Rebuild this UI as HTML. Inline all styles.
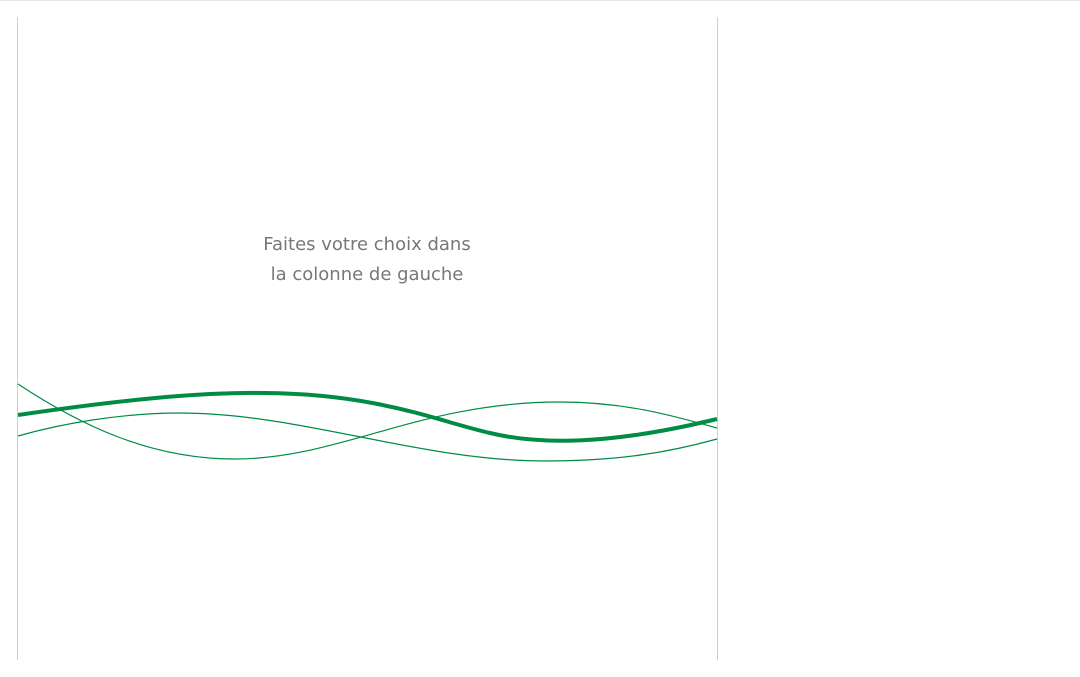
<!DOCTYPE html>
<html><head><meta charset="utf-8"><style>
html,body{margin:0;padding:0;background:#fff;width:1080px;height:677px;overflow:hidden;position:relative}
.top{position:absolute;left:0;top:0;width:1080px;height:1px;background:#e6e6e6}
.panel{position:absolute;left:17px;top:17px;width:699px;height:643px;border-left:1px solid #cfcfcf;border-right:1px solid #cfcfcf}
.txt{position:absolute;left:17px;width:700px;top:230px;text-align:center;font-family:"DejaVu Sans","Liberation Sans",sans-serif;font-size:18px;line-height:30px;color:#777}
svg{position:absolute;left:0;top:0}
</style></head><body>
<div class="top"></div>
<div class="panel"></div>
<div class="txt">Faites votre choix dans<br>la colonne de gauche</div>
<svg width="1080" height="677" viewBox="0 0 1080 677">
<g fill="none" stroke="#008c45">
<path d="M18,415 C120,400 200,392 265,393 C380,394 440,422 490,433 C540,445 610,445 717,419" stroke-width="4"/>
<path d="M18,384 C80,425 150,459 235,459 C340,459 420,402 560,402 C630,402 680,418 717,428" stroke-width="1.2"/>
<path d="M18,436 C60,424 120,413 180,413 C300,413 420,461 545,461 C620,461 670,452 717,439" stroke-width="1.2"/>
</g>
</svg>
</body></html>
